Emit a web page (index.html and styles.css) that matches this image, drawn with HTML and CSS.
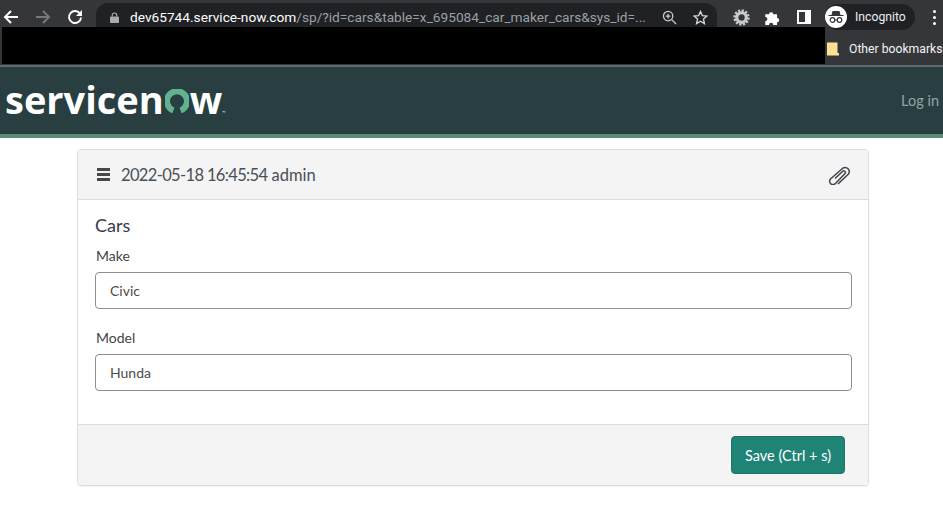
FILE: index.html
```html
<!DOCTYPE html>
<html lang="en">
<head>
<meta charset="utf-8">
<title>Cars</title>
<link rel="stylesheet" href="styles.css">
</head>
<body>
<div class="chrome">
  <div class="toolbar">
    <div class="nav-icons">
      <svg class="nav-icon" viewBox="0 0 16 16"><path d="M15 8H2.500M8 2 2 8l6 6" fill="none" stroke="#fff" stroke-width="2"/></svg>
      <svg class="nav-icon" viewBox="0 0 16 16"><path d="M1 8h12.500M8 2l6 6-6 6" fill="none" stroke="#77787b" stroke-width="2"/></svg>
      <svg class="nav-icon" viewBox="0 0 16 16"><path d="M13.200 5A6 6 0 1 0 14 8.500" fill="none" stroke="#fff" stroke-width="2"/><path d="M15 1v6H9z" fill="#fff"/></svg>
    </div>
    <div class="omnibox">
      <svg class="lock" viewBox="0 0 10 12"><path d="M2.500 5V3.500a2.500 2.500 0 0 1 5 0V5" fill="none" stroke="#a9abae" stroke-width="1.300"/><rect y="5" width="10" height="7" rx="1" fill="#a9abae"/></svg>
      <div class="url"><span class="host">dev65744.service-now.com</span>/sp/?id=cars&amp;table=x_695084_car_maker_cars&amp;sys_id=...</div>
      <svg class="omni-icon" viewBox="0 0 16 16"><circle cx="6.500" cy="6.500" r="5" fill="none" stroke="#c9cbce" stroke-width="1.400"/><path d="m10 10 5 5M4 6.500h5M6.500 4v5" stroke="#c9cbce" stroke-width="1.400"/></svg>
      <svg class="omni-icon" viewBox="0 0 16 16"><path d="m8 1.500 2 4.500 4.800.5-3.600 3.200 1 4.800L8 12l-4.200 2.500 1-4.800L1.200 6.500 6 6z" fill="none" stroke="#d5d7da" stroke-width="1.400"/></svg>
    </div>
    <div class="tools">
      <svg class="gear" viewBox="0 0 16 16"><circle cx="8" cy="8" r="4.500" fill="none" stroke="#c9cacc" stroke-width="3"/><circle cx="8" cy="8" r="6.500" fill="none" stroke="#c9cacc" stroke-width="2.500" stroke-dasharray="2 1.400"/></svg>
      <svg class="puzzle" viewBox="1 1 13.500 14"><path d="M1 5h3.500a2 2 0 1 1 4 0H12v3.500a2 2 0 1 1 0 4V15H8.500a2 2 0 1 0-4 0H1v-3.500a2 2 0 1 0 0-4z" fill="#fff"/></svg>
      <svg class="panel" viewBox="0 0 14 14"><path fill-rule="evenodd" d="M0 0h14v14H0zM2 2v10h6V2z" fill="#fff"/></svg>
      <div class="profile">
        <span class="avatar"><svg viewBox="0 0 22 22"><circle cx="11" cy="11" r="11" fill="#fff"/><path d="M7.500 5h7l1 4h3v1h-15V9h3z" fill="#35363a"/><circle cx="7.500" cy="14" r="2.300" fill="none" stroke="#35363a" stroke-width="1.200"/><circle cx="14.500" cy="14" r="2.300" fill="none" stroke="#35363a" stroke-width="1.200"/><path d="M9.800 14h2.400" stroke="#35363a"/></svg></span>
        <span>Incognito</span>
      </div>
      <div class="kebab"><i></i><i></i><i></i></div>
    </div>
  </div>
  <div class="bookmarks">
    <div class="redacted"></div>
    <div class="other">
      <svg class="folder" viewBox="0 0 12 14"><path d="M0 .5h10.500V11H12v2.500H0z" fill="#fde293"/></svg>
      <span>Other bookmarks</span>
    </div>
  </div>
</div>

<header class="site-nav">
  <div class="logo">servicen<svg class="logo-o" viewBox="0 0 24 24"><path d="M8.400 21.500a10 10 0 1 1 7.200 0" fill="none" stroke="#62b28f" stroke-width="6"/></svg>w<span class="tm">™</span></div>
  <a class="login">Log in</a>
</header>

<main class="page">
  <section class="card">
    <div class="card-head">
      <div class="card-title">
        <svg class="menu" viewBox="0 0 13 13"><path d="M0 0h13v3H0zM0 5h13v3H0zM0 10h13v3H0z" fill="#484848"/></svg>
        <span><span class="stamp">2022-05-18 16:45:54</span> admin</span>
      </div>
      <svg class="clip" viewBox="0 0 23 20"><path d="M10 19 20.500 9A4.200 4.200 0 0 0 15 3L2.500 14A3.300 3.300 0 0 0 7.500 18.500L17 8.500A1.600 1.600 0 0 0 14.500 6.500L7 13.500" fill="none" stroke="#3f454b" stroke-width="1.500"/></svg>
    </div>
    <div class="card-body">
      <h2 class="form-title">Cars</h2>
      <div class="field">
        <label class="field-label">Make</label>
        <div class="input">Civic</div>
      </div>
      <div class="field">
        <label class="field-label">Model</label>
        <div class="input">Hunda</div>
      </div>
    </div>
    <div class="card-foot">
      <button class="save">Save (Ctrl + s)</button>
    </div>
  </section>
</main>
</body>
</html>
```

FILE: styles.css
```css
* { box-sizing: border-box; }
html, body { margin: 0; padding: 0; }
body {
  width: 943px;
  height: 510px;
  overflow: hidden;
  background: #fff;
  font-family: "Lato", "Liberation Sans", sans-serif;
  color: #333;
}

.chrome {
  height: 67px;
  background: #35363a;
  font-family: "Roboto", "Liberation Sans", sans-serif;
  border-bottom: 2px solid #5b6b6d;
}
.toolbar {
  height: 27px;
  display: flex;
  align-items: flex-end;
}
.nav-icons {
  width: 96px;
  height: 20px;
  padding-left: 3px;
  display: flex;
  align-items: center;
  gap: 16px;
}
.nav-icon { width: 16px; height: 16px; }
.omnibox {
  width: 621px;
  height: 24px;
  background: #202124;
  border-radius: 12px 12px 0 0;
  display: flex;
  align-items: center;
  padding: 4px 9px 0 14px;
}
.lock { width: 9px; height: 11px; flex: none; }
.url {
  flex: 1;
  min-width: 0;
  margin-left: 11px;
  font-size: 13.700px;
  color: #9aa0a6;
  white-space: nowrap;
}
.host { color: #fff; }
.omni-icon { width: 15px; height: 15px; margin-left: 16px; flex: none; }
.tools {
  flex: 1;
  height: 20px;
  display: flex;
  align-items: center;
  padding-left: 16px;
}
.gear { width: 17px; height: 17px; flex: none; }
.puzzle { width: 15px; height: 15px; margin-left: 15px; flex: none; }
.panel { width: 14px; height: 14px; margin-left: 17px; flex: none; }
.profile {
  width: 90px;
  height: 26px;
  flex: none;
  margin-left: 14px;
  background: #202124;
  border-radius: 13px;
  display: flex;
  align-items: center;
  gap: 8px;
  color: #eceef0;
  font-size: 12.200px;
}
.avatar { width: 22px; height: 22px; display: flex; }
.kebab {
  margin-left: 18px;
  display: flex;
  flex-direction: column;
  gap: 3px;
}
.kebab i { width: 3px; height: 3px; border-radius: 50%; background: #fff; }

.bookmarks {
  height: 38px;
  display: flex;
  padding-left: 2px;
}
.redacted { width: 823px; height: 37px; flex: none; background: #000; }
.other {
  display: flex;
  align-items: center;
  gap: 10px;
  padding-left: 2px;
  padding-top: 5px;
  color: #f1f3f4;
  font-size: 12.200px;
  white-space: nowrap;
}
.folder { width: 12px; height: 14px; flex: none; }

.site-nav {
  height: 71px;
  background: #293e40;
  border-bottom: 4px solid #5d8a74;
  display: flex;
  align-items: center;
  justify-content: space-between;
  padding: 0 4px 0 5px;
}
.logo {
  display: flex;
  align-items: baseline;
  font-family: "Open Sans", sans-serif;
  font-weight: 700;
  font-size: 38px;
  letter-spacing: 0;
  color: #fff;
  line-height: 1;
  padding-bottom: 4px;
}
.logo-o { width: 24px; height: 24px; margin: 0 1px; align-self: flex-end; margin-bottom: 5px; flex: none; }
.tm { font-size: 4px; font-weight: 400; letter-spacing: 0; }
.login { color: #8fa5a6; font-size: 14.500px; }

.page { padding: 11px 74px 0 77px; }
.card {
  height: 337px;
  border: 1px solid #ddd;
  border-radius: 4px;
  display: flex;
  flex-direction: column;
  box-shadow: 0 1px 1px rgba(0, 0, 0, .05);
}
.card-head {
  height: 50px;
  background: #f4f4f4;
  border-bottom: 1px solid #ddd;
  border-radius: 3px 3px 0 0;
  display: flex;
  align-items: center;
  justify-content: space-between;
  padding: 0 17px 0 19px;
}
.card-title {
  display: flex;
  align-items: center;
  gap: 11px;
  font-size: 16.500px;
  color: #484f57;
}
.stamp { letter-spacing: -.65px; }
.menu { width: 13px; height: 13px; }
.clip { width: 23px; height: 20px; }
.card-body {
  flex: 1;
  padding: 14px 16px 0 17px;
}
.form-title {
  margin: 0 0 12px;
  font-size: 18px;
  font-weight: 400;
  line-height: 22px;
  color: #343d47;
}
.field { margin-bottom: 21px; }
.field-label {
  display: block;
  margin: 0 0 8px 1px;
  font-size: 14px;
  line-height: 16px;
  color: #444;
}
.input {
  height: 37px;
  border: 1px solid #8e8e8e;
  border-radius: 4px;
  padding: 0 14px;
  display: flex;
  align-items: center;
  font-size: 14px;
  color: #4b4b4b;
  background: #fff;
}
.card-foot {
  height: 61px;
  background: #f4f4f4;
  border-top: 1px solid #ddd;
  border-radius: 0 0 3px 3px;
  display: flex;
  align-items: center;
  justify-content: flex-end;
  padding-right: 23px;
}
.save {
  width: 114px;
  height: 38px;
  border: 1px solid #1c7466;
  border-radius: 4px;
  background: #1f8476;
  color: #fff;
  font-family: inherit;
  font-size: 14.500px;
  padding: 0;
}
```
